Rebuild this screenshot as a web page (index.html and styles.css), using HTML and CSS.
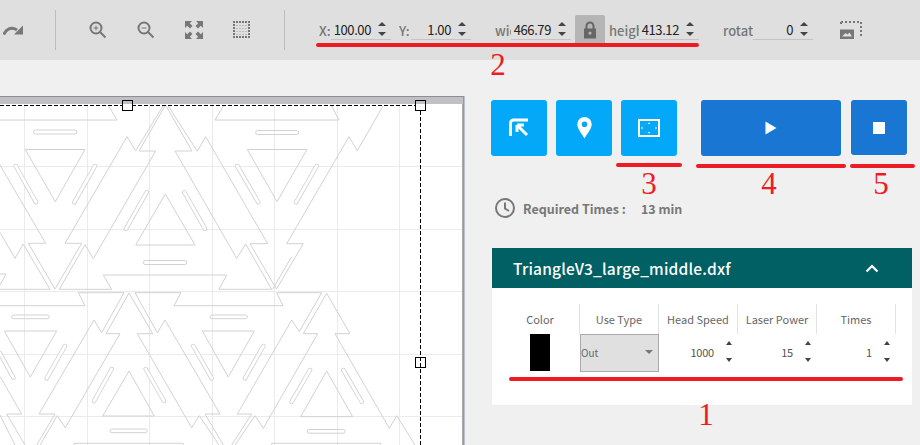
FILE: index.html
```html
<!DOCTYPE html>
<html lang="en">
<head>
<meta charset="utf-8">
<title>Laser cutter</title>
<link rel="stylesheet" href="styles.css">
</head>
<body>
<div class="app">
  <header class="toolbar">
    <svg class="redo" width="20" height="10" viewBox="0 0 20 10"><path class="redo-arc" d="M0.800 9.500C3 4 8 1.500 14 5"/><path class="tool-fill" d="M20 0.500V9.500H11Z"/></svg>
    <span class="sep sep-first"></span>
    <div class="tools">
      <span class="tool"><svg width="18" height="18" viewBox="0 0 18 18"><circle class="tool-line" cx="7" cy="7" r="5.500"/><path class="tool-line" d="M11 11L16.500 16.500"/><path class="tool-thin" d="M7 4.500V9.500M4.500 7H9.500"/></svg></span>
      <span class="tool"><svg width="18" height="18" viewBox="0 0 18 18"><circle class="tool-line" cx="7" cy="7" r="5.500"/><path class="tool-line" d="M11 11L16.500 16.500"/><path class="tool-thin" d="M4.500 7H9.500"/></svg></span>
      <span class="tool"><svg width="18" height="18" viewBox="0 0 18 18"><path class="tool-fill" d="M0 0H7L4.800 2.200L7.500 5L5 7.500L2.200 4.800L0 7ZM18 0V7L15.800 4.800L13 7.500L10.500 5L13.200 2.200L11 0ZM0 18V11L2.200 13.200L5 10.500L7.500 13L4.800 15.800L7 18ZM18 18H11L13.200 15.800L10.500 13L13 10.500L15.800 13.200L18 11Z"/></svg></span>
      <span class="tool"><svg width="18" height="18" viewBox="0 0 18 18"><path class="tool-dots faint" d="M0 4.500H17M0 7.500H17M0 10.500H17M0 13.500H17"/><path class="tool-dots" d="M0 1H17M0 16H17"/><path class="tool-dots" d="M1 0V17M16 0V17"/></svg></span>
    </div>
    <span class="sep sep-second"></span>
    <div class="fields">
      <label class="field"><span class="name name-s">X:</span><span class="value"><span class="num">100.00</span><i class="spin"></i></span></label>
      <label class="field gap-s"><span class="name name-s">Y:</span><span class="value"><span class="num">1.00</span><i class="spin"></i></span></label>
      <label class="field gap-l"><span class="name name-w">width</span><span class="value"><span class="num">466.79</span><i class="spin"></i></span></label>
      <span class="lock"><svg width="14" height="18" viewBox="0 0 14 18"><path class="lock-bow" d="M3.500 8V5A3.500 3.500 0 0 1 10.500 5V8"/><path class="lock-body" fill-rule="evenodd" d="M1 7.500H13V17.500H1ZM7 10.500A1.600 1.600 0 1 0 7 13.700A1.600 1.600 0 1 0 7 10.500Z"/></svg></span>
      <label class="field"><span class="name name-l">height</span><span class="value"><span class="num">413.12</span><i class="spin"></i></span></label>
      <label class="field gap-l"><span class="name name-l">rotate</span><span class="value"><span class="num">0</span><i class="spin"></i></span></label>
      <svg class="image-tool" width="22" height="18" viewBox="0 0 22 18"><path class="image-dash" d="M1 1H21V17M1 1V4"/><path class="tool-fill" d="M0 8.500H14V18H0ZM2 15.500H12L9.500 11.500L7.500 13.500L5.500 12Z" fill-rule="evenodd"/></svg>
    </div>
  </header>

  <div class="main">
    <section class="stage">
      <svg class="canvas" width="465" height="349" viewBox="0 96 465 349">
        <defs>
          <linearGradient id="handle-fill" x1="0" y1="0" x2="0" y2="1">
            <stop offset="0.35" stop-color="#c1c1c1"/>
            <stop offset="0.35" stop-color="#fff"/>
          </linearGradient>
        </defs>
        <rect class="frame" x="0" y="96.500" width="464" height="349"/>
        <rect class="band" x="0" y="97" width="463" height="7"/>
        <rect class="sheet" x="0" y="104" width="462" height="341"/>
        <path class="grid" d="M24.500 104V445M87.500 104V445M149.500 104V445M212.500 104V445M274.500 104V445M337.500 104V445M399.500 104V445M0 166.500H462M0 229.500H462M0 291.500H462M0 354.500H462M0 416.500H462"/>
        <g class="cut">
          <path d="M0 120H117L108 105M224 105L215 120H339L331 105"/>
          <rect x="33.500" y="130" width="43.500" height="4" rx="2"/>
          <rect x="255.700" y="130.500" width="43" height="4" rx="2"/>
          <rect x="143.300" y="260.500" width="43.500" height="4" rx="2"/>
          <path d="M25.300 149.500H85L55.300 201.700ZM247.300 149.500H307L277 201.700ZM165.300 194L195 245H135.700Z"/>
          <path class="slot" d="M15.700 166L36 202.300M95 166L74.300 202.300M237.300 166L258.300 202.300M316.700 166L296 202.300M146.700 192.300L126 228.700M184.300 192.300L205 228.700"/>
          <path class="slot-in" d="M15.700 166L36 202.300M95 166L74.300 202.300M237.300 166L258.300 202.300M316.700 166L296 202.300M146.700 192.300L126 228.700M184.300 192.300L205 228.700"/>
          <path d="M165.500 105L139 151H155.700L93.300 258.700L85 244.700L59.300 289.300H111.700L103.300 275H226.700L219 289.300H271.700L245.700 244L236.700 258.300L175 151H192L165.500 105"/>
          <path d="M163 106L135.700 150.700L127 136.700L65 243.300H81.700L55 289L28.300 243.300H45.700L0 165"/>
          <path d="M0 289.300H50L23.300 244L15 258.300L0 232.300"/>
          <path d="M168.300 106L197.300 151.300L205.700 136.700L267.700 243.700H250L276.500 289L303.300 243.700H286.700L349 136.700L357.300 150.700L383 106"/>
          <path d="M291.500 257L272.700 289"/>
          <path d="M0 274H6L0 285M0 305.700H85L78.300 292.700H124L101.700 332.700L94 320L39 414H55L36.700 445M135 292.700H181L174 305.700H283L276.700 292.700H321.700L299.300 331.700L291.700 320L237.300 414H251.700L231.700 445"/>
          <path d="M129 293L106 333.700H120L65.300 427.700L57.300 415.700L40 445M129 293L152.700 333.700H137.300L191.700 427.700L199.300 415.700L219 445M135 292.700L157.300 332.700L165 320L220 414H205L223.300 445"/>
          <path d="M326.700 293.300L303.300 333.700H317.700L263.300 428.300L255 415.700L235 445M326.700 293.300L350 333.700H335L389.300 428.300L396.700 415.700L415 445"/>
          <path d="M0 376.500L21.700 414H6.700L25 445M0 415L15 445"/>
          <path d="M4.300 331H56.700L30.300 377ZM202.300 331H254.300L228.300 377ZM129 371L154.300 416H102.700ZM326.700 371L352.700 416.700H300.700Z"/>
          <path class="slot" d="M65 346L46.700 378.300M0 353.300L13.300 377.700M193.300 346L211.700 378.300M263.300 346L245 378.300M111.700 369L94 401M145.700 369L164 401M310 370L291.700 401.700M343.300 370L361.700 401.700"/>
          <path class="slot-in" d="M65 346L46.700 378.300M0 353.300L13.300 377.700M193.300 346L211.700 378.300M263.300 346L245 378.300M111.700 369L94 401M145.700 369L164 401M310 370L291.700 401.700M343.300 370L361.700 401.700"/>
          <rect x="11.700" y="315" width="37.500" height="3.700" rx="1.800"/>
          <rect x="210" y="315" width="37.300" height="3.700" rx="1.800"/>
          <rect x="110" y="429" width="37.300" height="3.700" rx="1.800"/>
          <rect x="307.300" y="429.500" width="37.700" height="3.700" rx="1.800"/>
          <path d="M74 445V443.300H183.300V445M271.700 445V443.300H380.700V445"/>
        </g>
        <path class="select" d="M0 105.500H420.500V445"/>
        <rect class="handle" x="122.500" y="100.500" width="10" height="10"/>
        <rect class="handle" x="415.500" y="100.500" width="10" height="10"/>
        <rect class="handle-open" x="415.500" y="357.500" width="10" height="10"/>
      </svg>
    </section>

    <aside class="side">
      <div class="actions">
        <button class="btn light"><svg width="20" height="20" viewBox="0 0 20 20"><path class="icon-line" d="M1.500 18V5A3 3 0 0 1 4.500 2H19"/><path class="icon-line" d="M8 7H15M8 7V14M8.500 7.500L18 17"/></svg></button>
        <button class="btn light"><svg width="15" height="22" viewBox="0 0 15 22"><path class="icon-fill" fill-rule="evenodd" d="M7.500 0A7.200 7.200 0 0 1 14.700 7.200C14.700 12 9.500 17.500 7.500 21.500C5.500 17.500 0.300 12 0.300 7.200A7.200 7.200 0 0 1 7.500 0ZM7.500 4.500A2.800 2.800 0 1 0 7.500 10.100A2.800 2.800 0 1 0 7.500 4.500Z"/></svg></button>
        <button class="btn light"><svg width="22" height="18" viewBox="0 0 22 18"><rect class="icon-line thin" x="1" y="1" width="20" height="16"/><path class="icon-fill" d="M9.500 5L11 3.500L12.500 5ZM9.500 13L11 14.500L12.500 13ZM4.500 7.500L3 9L4.500 10.500ZM17.500 7.500L19 9L17.500 10.500Z"/></svg></button>
        <button class="btn dark play"><svg width="12" height="14" viewBox="0 0 12 14"><path class="icon-fill" d="M0.500 0.500L11.500 7L0.500 13.500Z"/></svg></button>
        <button class="btn dark stop"><span class="stop-mark"></span></button>
      </div>

      <div class="timing">
        <svg width="20" height="20" viewBox="0 0 20 20"><circle class="clock" cx="10" cy="10" r="9"/><path class="clock" d="M10 4.500V10.500L14 13"/></svg>
        <span class="timing-label">Required Times :</span>
        <span class="timing-value">13 min</span>
      </div>

      <section class="panel">
        <h2 class="panel-head">
          <span>TriangleV3_large_middle.dxf</span>
          <svg width="14" height="9" viewBox="0 0 14 9"><path class="chevron" d="M1.500 7.500L7 2L12.500 7.500"/></svg>
        </h2>
        <div class="panel-body">
          <div class="cols heads">
            <span class="col-head">Color</span>
            <span class="col-head">Use Type</span>
            <span class="col-head">Head Speed</span>
            <span class="col-head">Laser Power</span>
            <span class="col-head">Times</span>
          </div>
          <div class="cols cells">
            <span class="cell"><i class="swatch"></i></span>
            <span class="use"><span>Out</span><i class="caret"></i></span>
            <span class="cell-num"><span>1000</span><i class="spin"></i></span>
            <span class="cell-num"><span>15</span><i class="spin"></i></span>
            <span class="cell-num"><span>1</span><i class="spin"></i></span>
          </div>
        </div>
      </section>
    </aside>
  </div>

  <div class="note line-2"></div><div class="digit digit-2">2</div>
  <div class="note line-3"></div><div class="digit digit-3">3</div>
  <div class="note line-4"></div><div class="digit digit-4">4</div>
  <div class="note line-5"></div><div class="digit digit-5">5</div>
  <div class="note line-1"></div><div class="digit digit-1">1</div>
</div>
</body>
</html>
```

FILE: styles.css
```css
* { box-sizing: border-box; }
html, body { margin: 0; padding: 0; }
body { background: #f0f0f0; font-family: "Noto Sans CJK JP", "Noto Sans", sans-serif; color: #777; }
.app { position: relative; width: 920px; height: 445px; overflow: hidden; display: flex; flex-direction: column; }

/* toolbar */
.toolbar { height: 60px; flex: none; background: #dfdfdf; display: flex; align-items: center; padding-left: 3px; }
.redo { flex: none; width: 20px; }
.redo-arc { fill: none; stroke: #777; stroke-width: 3; }
.sep { width: 1px; height: 40px; background: #bdbdbd; flex: none; }
.sep-first { margin-left: 32px; margin-right: 18px; }
.sep-second { margin-left: 18px; margin-right: 34px; }
.tools { display: flex; }
.tool { width: 48px; display: flex; justify-content: center; align-items: center; }
.tool-fill { fill: #777; }
.tool-line { fill: none; stroke: #777; stroke-width: 2; }
.tool-thin { fill: none; stroke: #777; stroke-width: 1; }
.tool-dots { fill: none; stroke: #777; stroke-width: 2; stroke-dasharray: 2 1; }
.tool-dots.faint { stroke: #999; stroke-width: 1; stroke-dasharray: 1 2; stroke-dashoffset: -0.500; }
.fields { display: flex; align-items: center; }
.field { display: flex; height: 20px; }
.gap-s { margin-left: 8px; }
.gap-l { margin-left: 24px; }
.name { font-size: 13px; font-weight: 500; color: #777; line-height: 21px; overflow: hidden; white-space: nowrap; }
.name-s { width: 12px; }
.name-w { width: 16px; }
.name-l { width: 30px; }
.value { position: relative; width: 60px; height: 20px; border-bottom: 1px solid #c4c4c4; display: block; text-align: right; padding-right: 20px; font-size: 13px; letter-spacing: -0.400px; line-height: 19px; color: #222; }
.num { display: block; }
.spin { position: absolute; right: 5px; top: 2px; width: 8px; height: 14px; display: block; }
.spin::before, .spin::after { content: ""; position: absolute; left: 0; border-left: 4px solid transparent; border-right: 4px solid transparent; }
.spin::before { top: 0; border-bottom: 4px solid #444; }
.spin::after { bottom: 0; border-top: 4px solid #444; }
.lock { width: 30px; height: 30px; margin-left: 4px; margin-right: 4px; background: #b5b5b5; border-radius: 2px; display: flex; align-items: center; justify-content: center; }
.lock-bow { fill: none; stroke: #666; stroke-width: 2; }
.lock-body { fill: #666; }
.image-tool { flex: none; margin-left: 27px; }
.image-dash { fill: none; stroke: #777; stroke-width: 2; stroke-dasharray: 2 2; }

/* canvas */
.main { flex: 1; display: flex; min-height: 0; }
.stage { width: 465px; flex: none; padding-top: 36px; }
.canvas { display: block; }
.frame { fill: #a8a8ae; stroke: #8a8f9a; stroke-width: 1; }
.band { fill: #c1c1c1; }
.sheet { fill: #fff; }
.grid { fill: none; stroke: #ebebeb; stroke-width: 1; }
.cut path, .cut rect { fill: none; stroke: #d2d2d2; stroke-width: 1; stroke-linejoin: round; }
.cut .slot { stroke-width: 4.500; stroke-linecap: round; }
.cut .slot-in { stroke-width: 2.800; stroke: #fff; stroke-linecap: round; }
.select { fill: none; stroke: #000; stroke-width: 1; stroke-dasharray: 4 2; }
.handle { fill: url(#handle-fill); stroke: #000; stroke-width: 1; }
.handle-open { fill: none; stroke: #000; stroke-width: 1; }

/* side */
.side { flex: 1; padding: 40px 0 0 26px; min-width: 0; }
.actions { display: flex; gap: 9px; align-items: flex-start; }
.btn { width: 56px; height: 56px; border: 0; padding: 0; border-radius: 3px; display: flex; align-items: center; justify-content: center; }
.light { background: #03a9f8; }
.dark { background: #1976d2; }
.play { width: 140px; margin-left: 15px; }
.stop { height: 55px; margin-left: 1px; }
.stop-mark { width: 12px; height: 12px; background: #fff; display: block; }
.icon-fill { fill: #fff; }
.icon-line { fill: none; stroke: #fff; stroke-width: 3; }
.icon-line.thin { stroke-width: 2; }
.timing { display: flex; align-items: center; margin-top: 42px; padding-left: 4px; height: 20px; font-size: 12.500px; font-weight: 700; color: #777; white-space: nowrap; }
.timing-label { margin-left: 8px; }
.timing-value { margin-left: 15px; }
.clock { fill: none; stroke: #777; stroke-width: 2; }
.panel { margin: 30px 0 0 1px; width: 420px; background: #fff; }
.panel-head { margin: 0; height: 40px; background: #006064; color: #fff; font-size: 15.500px; font-weight: 500; display: flex; align-items: center; justify-content: space-between; padding: 0 33px 0 21px; letter-spacing: 0.200px; }
.chevron { fill: none; stroke: #fff; stroke-width: 2.200; }
.panel-body { height: 117px; padding: 16px 0 0 9px; }
.cols { display: grid; grid-template-columns: repeat(5, 79px); }
.heads { height: 30px; }
.col-head { font-size: 11px; line-height: 30px; text-align: center; color: #666; border-right: 1px solid #e2e2e2; white-space: nowrap; }
.cells { height: 37px; }
.cell { display: flex; justify-content: center; padding-right: 2px; }
.swatch { width: 20px; height: 37px; background: #000; display: block; }
.use { position: relative; background: #e0e0e0; border: 1px solid #aaa; font-size: 10px; line-height: 36px; color: #666; }
.caret { position: absolute; right: 5px; top: 15px; border-left: 4px solid transparent; border-right: 4px solid transparent; border-top: 4px solid #777; }
.cell-num { position: relative; font-size: 11px; letter-spacing: -0.200px; line-height: 37px; color: #555; text-align: right; padding-right: 24px; }
.cell-num .spin { right: 4px; top: 7px; height: 21px; }
.cell-num .spin::before { border-left-width: 3px; border-right-width: 3px; }
.cell-num .spin::after { border-left-width: 3px; border-right-width: 3px; }

/* red annotations drawn over the screenshot */
.note { position: absolute; height: 4px; background: #ed1c24; border-radius: 2px; }
.line-2 { left: 316px; top: 43px; width: 383px; }
.line-3 { left: 616px; top: 163px; width: 66px; }
.line-4 { left: 696px; top: 164px; width: 150px; }
.line-5 { left: 850px; top: 164px; width: 65px; }
.line-1 { left: 509px; top: 377px; width: 394px; }
.digit { position: absolute; font-family: "Liberation Serif", serif; font-size: 31px; line-height: 32px; color: #ed1c24; width: 30px; text-align: center; }
.digit-2 { left: 483px; top: 49px; }
.digit-3 { left: 634px; top: 168px; }
.digit-4 { left: 754px; top: 168px; }
.digit-5 { left: 866px; top: 168px; }
.digit-1 { left: 691px; top: 399px; }
```
